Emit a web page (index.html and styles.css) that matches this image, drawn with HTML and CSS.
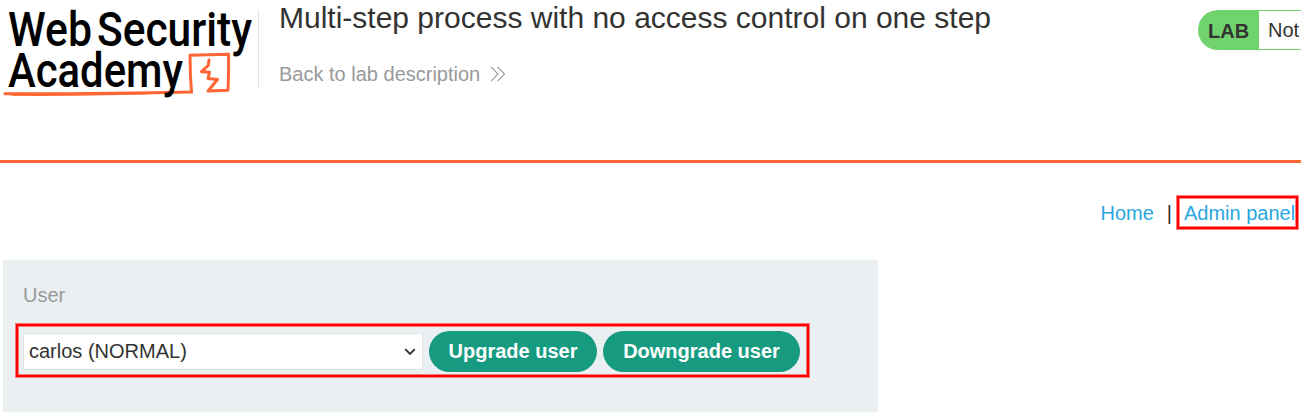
FILE: index.html
```html
<!DOCTYPE html>
<html lang="en">
<head>
<meta charset="utf-8">
<title>Multi-step process with no access control on one step</title>
<link rel="stylesheet" href="styles.css">
</head>
<body>
<header class="lab-header">
  <svg class="logo" width="258" height="104" viewBox="0 0 258 104" role="img" aria-label="Web Security Academy">
    <path class="logo-line" d="M191.500 92 C190.500 80 190 68 190 55.200 L228.500 54.200 C229 66 228.500 78 228 90.300 L208 91 L217.500 79.500 L208 78.500 L209.500 72.300 L201.500 71.700 L208.300 65.500 L209 60"/>
    <path class="logo-line" d="M191.500 92 C150 93 90 94 5 93.800"/>
    <path class="logo-line thin" d="M12 95 C60 95.500 100 94.800 150 93.500"/>
    <g class="logo-text">
      <text x="8" y="46" textLength="84" lengthAdjust="spacingAndGlyphs">Web</text>
      <text x="97" y="46" textLength="155" lengthAdjust="spacingAndGlyphs">Security</text>
      <text x="8" y="87" textLength="175" lengthAdjust="spacingAndGlyphs">Academy</text>
    </g>
  </svg>
  <div class="title-block">
    <h1 class="title">Multi-step process with no access control on one step</h1>
    <a class="back-link">Back to lab description
      <svg class="chevrons" width="16" height="16" viewBox="0 0 16 16"><path d="M1 .8 8 8 1 15.200M7.500 .8 14.500 8 7.500 15.200"/></svg>
    </a>
  </div>
  <div class="lab-status"><span class="lab-tag">LAB</span><span class="lab-state">Not</span></div>
</header>
<main class="content">
  <nav class="nav"><a>Home</a><span class="divider">|</span><a class="marked-link marked">Admin panel</a></nav>
  <form class="user-form">
    <label class="field-label">User</label>
    <div class="controls marked">
      <div class="select"><span>carlos (NORMAL)</span>
        <svg class="caret" width="12" height="8" viewBox="0 0 12 8"><path d="M1.200 1.200 6 6 10.800 1.200"/></svg>
      </div>
      <button type="button" class="button upgrade">Upgrade user</button>
      <button type="button" class="button downgrade">Downgrade user</button>
    </div>
  </form>
</main>
</body>
</html>
```
FILE: styles.css
```css
* { box-sizing: border-box; }
body {
  margin: 0;
  height: 418px;
  overflow: hidden;
  background: #fff;
  color: #333332;
  font: 20px/24px "Liberation Sans", Arial, sans-serif;
}
.lab-header {
  display: flex;
  align-items: flex-start;
  height: 163px;
  border-bottom: 3px solid #ff6633;
}
.logo { flex: none; display: block; }
.logo-text { font-family: Roboto, sans-serif; font-size: 48px; font-weight: 500; fill: #000; }
.logo-line { fill: none; stroke: #ff6633; stroke-width: 3; stroke-linejoin: round; stroke-linecap: round; }
.thin { stroke-width: 1.500; }
.title-block {
  flex: 1;
  height: 78px;
  margin-top: 10px;
  padding-left: 20px;
  border-left: 1px solid #e2e2e2;
}
.title { margin: -9px 0 0; font-size: 30px; line-height: 34px; font-weight: 400; white-space: nowrap; }
.back-link { display: flex; align-items: center; gap: 10px; margin-top: 27px; color: #999; }
.chevrons { fill: none; stroke: #999; stroke-width: 1.100; }
.lab-status {
  flex: none;
  display: flex;
  width: 103px;
  height: 40px;
  margin-top: 10px;
  border: 1px solid #71d36d;
  border-right: 0;
  border-radius: 20px 0 0 20px;
  background: linear-gradient(to right, #71d36d 60px, #fff 60px);
  line-height: 38px;
  white-space: nowrap;
}
.lab-tag { flex: none; width: 60px; padding-left: 9px; font-weight: 700; line-height: 40px; }
.lab-state { flex: none; width: 42px; padding-left: 9px; }
.nav {
  display: flex;
  justify-content: flex-end;
  align-items: center;
  height: 35px;
  margin-top: 32px;
  padding-right: 3px;
  color: #29a7df;
}
.divider { margin: 0 5px 0 13px; color: #333332; }
.marked {
  border: 2px solid #f00;
  box-shadow: 0 0 0 1px rgba(255, 0, 0, .5), inset 0 0 0 1px rgba(255, 0, 0, .5);
}
.marked-link {
  width: 121px;
  height: 33px;
  padding-left: 5px;
  line-height: 30px;
  white-space: nowrap;
}
.user-form {
  width: 875px;
  height: 152px;
  margin: 30px 0 0 3px;
  padding: 23px 13px 0;
  background: #eaeff2;
}
.field-label { display: block; padding-left: 7px; color: #999; }
.controls {
  display: flex;
  align-items: center;
  gap: 6px;
  width: 793px;
  height: 53px;
  margin-top: 17px;
  padding: 2px 0 0 5px;
}
.select {
  display: flex;
  align-items: center;
  justify-content: space-between;
  width: 400px;
  height: 37px;
  padding: 0 6px 1px 5px;
  border: 1px solid #e2e2e2;
  background: #fff;
}
.caret { fill: none; stroke: #333332; stroke-width: 1.900; position: relative; top: 1px; }
.button {
  height: 41px;
  padding: 0;
  border: 0;
  border-radius: 21px;
  background: #169b80;
  color: #fff;
  font: 700 20px/41px "Liberation Sans", Arial, sans-serif;
}
.upgrade { width: 168px; }
.downgrade { width: 197px; }
```
